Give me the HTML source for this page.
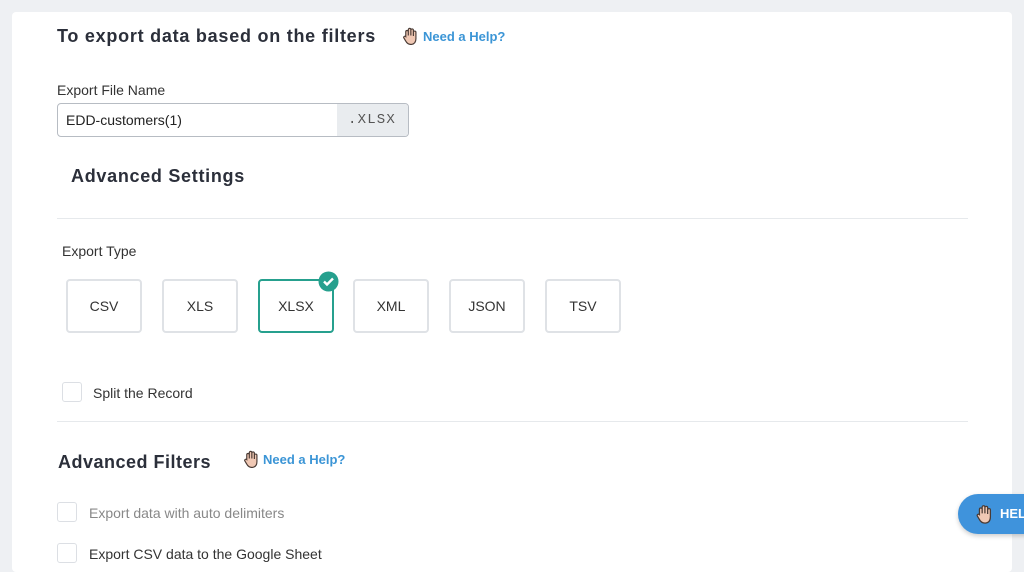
<!DOCTYPE html>
<html><head><meta charset="utf-8"><style>
*{box-sizing:border-box;margin:0;padding:0}
body{width:1024px;height:563px;overflow:hidden;background:#eef0f3;font-family:"Liberation Sans",sans-serif;position:relative}
.card{position:absolute;left:12px;top:12px;width:1000px;height:560px;background:#fff;border-radius:4px}
.a{position:absolute;white-space:nowrap}
.h{font-weight:bold;color:#2b2f3a;letter-spacing:0.4px}
.help{color:#3b95d6;font-size:13px;font-weight:bold}
.lbl{font-size:14px;color:#333}
.box{position:absolute;top:279px;width:76px;height:54px;border:2px solid #dfe2e6;border-radius:4px;font-size:14px;color:#333;display:flex;align-items:center;justify-content:center}
.cb{position:absolute;width:20px;height:20px;border:1px solid #dcdfe4;border-radius:3px;background:#fff}
.hr{position:absolute;left:57px;width:911px;height:1px;background:#e6e9ec}
</style></head><body>
<div class="card"></div>
<svg width="0" height="0" style="position:absolute"><defs><g id="hand"><path d="M3 9 V4.5 a1.2 1.2 0 0 1 2.4 0 V8 V2.5 a1.2 1.2 0 0 1 2.4 0 V8 V3 a1.2 1.2 0 0 1 2.4 0 V8.5 V5 a1.2 1.2 0 0 1 2.4 0 V11 q0 5-4.5 5.5 q-3.5 0-5-3 L1 10 a1.2 1.2 0 0 1 2-1 Z" fill="#f0c8b4" stroke="#4a3b35" stroke-width="1.1"/></g></defs></svg>
<div class="a h" style="left:57px;top:26px;font-size:18px;letter-spacing:0.75px">To export data based on the filters</div>
<svg class="a" style="left:402px;top:27px" width="16" height="18" viewBox="0 0 14 17"><use href="#hand"/></svg>
<div class="a help" style="left:423px;top:29px">Need a Help?</div>
<div class="a lbl" style="left:57px;top:82px">Export File Name</div>
<div class="a" style="left:57px;top:103px;width:352px;height:34px;border:1px solid #b7bcc3;border-radius:4px;overflow:hidden;background:#fff">
<div class="a" style="left:8px;top:8px;font-size:14px;color:#222">EDD-customers(1)</div>
<div class="a" style="left:279px;top:0;width:73px;height:34px;background:#e9ecef;font-family:'Liberation Mono',monospace;font-size:14px;color:#555;letter-spacing:1.2px;padding:8px 0 0 11px">.XLSX</div></div>
<div class="a h" style="left:71px;top:166px;font-size:18px;letter-spacing:0.7px">Advanced Settings</div>
<div class="hr" style="top:218px"></div>
<div class="a lbl" style="left:62px;top:243px">Export Type</div>
<div class="box" style="left:66px">CSV</div>
<div class="box" style="left:162px">XLS</div>
<div class="box" style="left:258px;border-color:#26a08e">XLSX</div>
<svg class="a" style="left:318px;top:271px" width="21" height="21" viewBox="0 0 21 21"><circle cx="10.5" cy="10.5" r="10" fill="#26a08e"/><path d="M6 10.5l3 3 6-6" stroke="#fff" stroke-width="2.4" fill="none"/></svg>
<div class="box" style="left:353px">XML</div>
<div class="box" style="left:449px">JSON</div>
<div class="box" style="left:545px">TSV</div>
<div class="cb" style="left:62px;top:382px"></div>
<div class="a lbl" style="left:93px;top:385px">Split the Record</div>
<div class="hr" style="top:421px"></div>
<div class="a h" style="left:58px;top:452px;font-size:18px;letter-spacing:0.5px">Advanced Filters</div>
<svg class="a" style="left:243px;top:450px" width="16" height="18" viewBox="0 0 14 17"><use href="#hand"/></svg>
<div class="a help" style="left:263px;top:452px">Need a Help?</div>
<div class="cb" style="left:57px;top:502px"></div>
<div class="a lbl" style="left:89px;top:505px;color:#888">Export data with auto delimiters</div>
<div class="cb" style="left:57px;top:543px"></div>
<div class="a lbl" style="left:89px;top:546px">Export CSV data to the Google Sheet</div>
<div class="a" style="left:958px;top:494px;width:90px;height:40px;background:#3f93dc;border-radius:20px;box-shadow:0 2px 5px rgba(0,0,0,.2)">
<svg class="a" style="left:18px;top:10px" width="16" height="20" viewBox="0 0 14 17"><use href="#hand"/></svg>
<div class="a" style="left:42px;top:12px;color:#fff;font-weight:bold;font-size:13px">HELP</div></div>
</body></html>
